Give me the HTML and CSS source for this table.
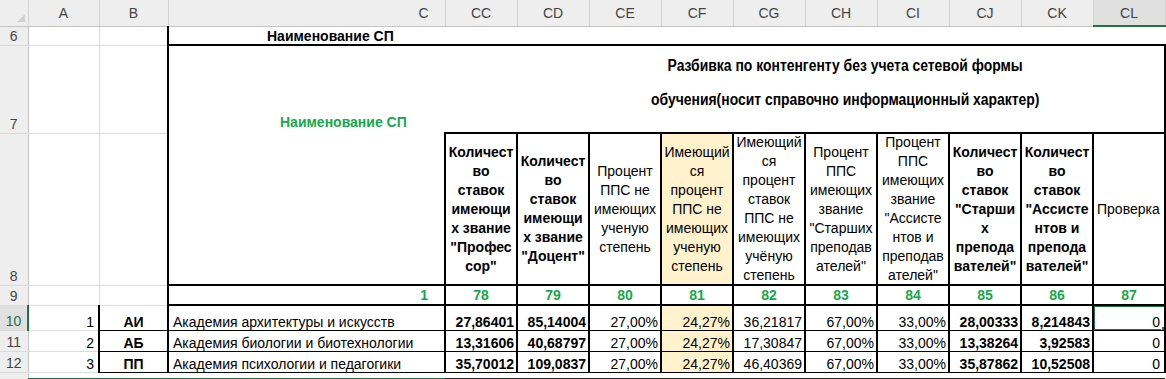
FILE: index.html
```html
<!DOCTYPE html>
<html lang="ru">
<head>
<meta charset="utf-8">
<link rel="stylesheet" href="styles.css">
</head>
<body>
<table class="sheet">
  <colgroup>
    <col class="w-rh"><col class="w-a"><col class="w-b"><col class="w-c">
    <col class="w-n"><col class="w-n"><col class="w-n"><col class="w-n"><col class="w-n">
    <col class="w-n"><col class="w-n"><col class="w-n"><col class="w-n"><col class="w-n">
  </colgroup>
  <tr class="r-head">
    <th class="corner"><span class="tri"></span></th>
    <th class="ch">A</th>
    <th class="ch">B</th>
    <th class="ch ch-c">C</th>
    <th class="ch">CC</th><th class="ch">CD</th><th class="ch">CE</th><th class="ch">CF</th><th class="ch">CG</th>
    <th class="ch">CH</th><th class="ch">CI</th><th class="ch">CJ</th><th class="ch">CK</th><th class="ch ch-sel">CL</th>
  </tr>
  <tr class="r6">
    <td class="rh">6</td>
    <td class="g"></td><td class="g"></td>
    <td class="c6 b">Наименование СП</td>
    <td class="cc6" colspan="10"></td>
  </tr>
  <tr class="r7">
    <td class="rh">7</td>
    <td class="g"></td><td class="g"></td>
    <td class="c7 b green">Наименование СП</td>
    <td class="cc7" colspan="10"><div class="title"><span class="tline">Разбивка по контенгенту без учета сетевой формы</span><span class="tline">обучения(носит справочно информационный характер)</span></div></td>
  </tr>
  <tr class="r8">
    <td class="rh">8</td>
    <td class="g"></td><td class="g"></td>
    <td class="c8"></td>
    <td class="hc b"><div class="hd">Количест<br>во<br>ставок<br>имеющи<br>х звание<br>"Профес<br>сор"</div></td>
    <td class="hc b"><div class="hd">Количест<br>во<br>ставок<br>имеющи<br>х звание<br>"Доцент"</div></td>
    <td class="hc"><div class="hd">Процент<br>ППС не<br>имеющих<br>ученую<br>степень</div></td>
    <td class="hc yel"><div class="hd">Имеющий<br>ся<br>процент<br>ППС не<br>имеющих<br>ученую<br>степень</div></td>
    <td class="hc"><div class="hd">Имеющий<br>ся<br>процент<br>ставок<br>ППС не<br>имеющих<br>учёную<br>степень</div></td>
    <td class="hc"><div class="hd">Процент<br>ППС<br>имеющих<br>звание<br>"Старших<br>преподав<br>ателей"</div></td>
    <td class="hc"><div class="hd">Процент<br>ППС<br>имеющих<br>звание<br>"Ассисте<br>нтов и<br>преподав<br>ателей"</div></td>
    <td class="hc b"><div class="hd">Количест<br>во<br>ставок<br>"Старши<br>х<br>препода<br>вателей"</div></td>
    <td class="hc b"><div class="hd">Количест<br>во<br>ставок<br>"Ассисте<br>нтов и<br>препода<br>вателей"</div></td>
    <td class="hc"><div class="hd hd-left">Проверка</div></td>
  </tr>
  <tr class="r9">
    <td class="rh">9</td>
    <td class="g"></td><td class="g"></td>
    <td class="tk b green c9">1</td>
    <td class="tk b green">78</td><td class="tk b green">79</td><td class="tk b green">80</td><td class="tk b green">81</td><td class="tk b green">82</td>
    <td class="tk b green">83</td><td class="tk b green">84</td><td class="tk b green">85</td><td class="tk b green">86</td><td class="tk b green">87</td>
  </tr>
  <tr class="r10">
    <td class="rh rh-sel">10</td>
    <td class="g num">1</td>
    <td class="code b">АИ</td>
    <td class="name">Академия архитектуры и искусств</td>
    <td class="d b">27,86401</td><td class="d b">85,14004</td><td class="d">27,00%</td><td class="d yel">24,27%</td><td class="d">36,21817</td>
    <td class="d">67,00%</td><td class="d">33,00%</td><td class="d b">28,00333</td><td class="d b">8,214843</td>
    <td class="d dl sel-cell">0<span class="sel"><span class="handle"></span></span></td>
  </tr>
  <tr class="r11">
    <td class="rh">11</td>
    <td class="g num">2</td>
    <td class="code b">АБ</td>
    <td class="name">Академия биологии и биотехнологии</td>
    <td class="d b">13,31606</td><td class="d b">40,68797</td><td class="d">27,00%</td><td class="d yel">24,27%</td><td class="d">17,30847</td>
    <td class="d">67,00%</td><td class="d">33,00%</td><td class="d b">13,38264</td><td class="d b">3,92583</td><td class="d dl">0</td>
  </tr>
  <tr class="r12">
    <td class="rh">12</td>
    <td class="g num">3</td>
    <td class="code b">ПП</td>
    <td class="name">Академия психологии и педагогики</td>
    <td class="d b">35,70012</td><td class="d b">109,0837</td><td class="d">27,00%</td><td class="d yel">24,27%</td><td class="d">46,40369</td>
    <td class="d">67,00%</td><td class="d">33,00%</td><td class="d b">35,87862</td><td class="d b">10,52508</td><td class="d dl">0</td>
  </tr>
  <tr class="r13">
    <td class="rh"></td>
    <td class="e13 gl"></td><td class="e13 gl"></td><td class="e13 gl"></td>
    <td class="e13"></td><td class="e13"></td><td class="e13"></td><td class="e13"></td><td class="e13"></td>
    <td class="e13"></td><td class="e13"></td><td class="e13"></td><td class="e13"></td><td class="e13"></td>
  </tr>
</table>
</body>
</html>
```
FILE: styles.css
```css
html, body {
  margin: 0;
  padding: 0;
  background: #fff;
}
body {
  width: 1166px;
  height: 379px;
  overflow: hidden;
}
.sheet {
  border-collapse: collapse;
  table-layout: fixed;
  width: 1165px;
  font-family: "Liberation Sans", Arial, sans-serif;
  font-size: 14px;
  color: #000;
}
.w-rh { width: 28px; }
.w-a { width: 71px; }
.w-b { width: 69px; }
.w-c { width: 277px; }
.w-n { width: 72px; }

td, th {
  padding: 0 2px;
  white-space: nowrap;
  overflow: hidden;
  font-weight: normal;
}
.b { font-weight: bold; }
.green { color: #14a94b; }

/* headers */
.r-head { height: 26px; }
.corner {
  background: #eeeeee;
  border-right: 1px solid #d2d2d2;
  border-bottom: 1px solid #c4c4c4;
  position: relative;
}
.tri {
  position: absolute;
  right: 3px;
  bottom: 4px;
  width: 0;
  height: 0;
  border-left: 8px solid transparent;
  border-bottom: 8px solid #d0d0d0;
}
.ch {
  background: #eeeeee;
  color: #444;
  text-align: center;
  border-right: 1px solid #d2d2d2;
  border-bottom: 1px solid #c4c4c4;
  vertical-align: middle;
}
.ch-c { text-align: right; padding-right: 16px; }
.ch-sel {
  background: #e0e0e0;
  border-bottom: 2px solid #217346;
}
.rh {
  background: #eeeeee;
  color: #444;
  text-align: center;
  vertical-align: bottom;
  padding: 0 0 1px 0;
  border-right: 1px solid #c4c4c4;
  border-bottom: 1px solid #dadada;
}
.rh-sel {
  background: #e0e0e0;
  color: #217346;
  border-right: 2px solid #217346;
}
.g { border: 1px solid #dcdcdc; }

/* rows */
.r6 { height: 19px; }
.r7 { height: 88px; }
.r8 { height: 152px; }
.r9 { height: 20px; }
.r10 { height: 25px; }
.r11 { height: 21px; }
.r12 { height: 21px; }
.r13 { height: 7px; }

.c6 {
  border-left: 2px solid #000;
  border-bottom: 2px solid #000;
  text-align: left;
  padding-left: 98px;
  vertical-align: bottom;
}
.cc6 { border-bottom: 2px solid #000; }
.c7 {
  border-left: 2px solid #000;
  border-top: 2px solid #000;
  vertical-align: bottom;
  padding-left: 111px;
  padding-bottom: 3px;
}
.cc7 {
  border-top: 2px solid #000;
  border-bottom: 2px solid #000;
  border-right: 2px solid #000;
  vertical-align: top;
  padding: 0;
}
.title {
  font-weight: bold;
  display: flex;
  flex-direction: column;
  align-items: center;
  line-height: 34px;
  padding: 3px 0 0 82px;
  font-size: 16px;
}
.tline {
  display: block;
  transform: scaleX(0.87);
  transform-origin: center;
}
.c8 {
  border-left: 2px solid #000;
  border-bottom: 2px solid #000;
}
.hc {
  border: 2px solid #000;
  padding: 0;
  vertical-align: middle;
}
.hd {
  height: 149px;
  display: flex;
  flex-direction: column;
  justify-content: center;
  align-items: center;
  text-align: center;
  line-height: 19px;
  overflow: hidden;
}
.hd-left { align-items: flex-start; padding-left: 3px; }
.yel { background: #fff2cc; }

.tk {
  border: 2px solid #000;
  text-align: center;
  vertical-align: middle;
}
.c9 { text-align: right; padding-right: 16px; }

.code {
  border: 1px solid #000;
  border-left: 2px solid #000;
  text-align: center;
  vertical-align: bottom;
}
.name {
  border-top: 1px solid #000;
  border-bottom: 1px solid #000;
  border-left: 2px solid #000;
  border-right: 2px solid #000;
  vertical-align: bottom;
  padding-left: 4px;
}
.d {
  border-top: 1px solid #000;
  border-bottom: 1px solid #000;
  border-left: 2px solid #000;
  border-right: 2px solid #000;
  text-align: right;
  vertical-align: bottom;
  padding-right: 2px;
}
.dl { padding-right: 4px; }
.num { text-align: right; vertical-align: bottom; padding-right: 4px; }
.sel-cell { position: relative; }
.sel {
  position: absolute;
  left: -1px;
  top: -1px;
  right: -2px;
  bottom: -1px;
  border: 2px solid #217346;
}
.handle {
  position: absolute;
  right: -5px;
  bottom: -5px;
  width: 6px;
  height: 6px;
  background: #217346;
  border: 1px solid #fff;
}
.e13 { border-bottom: 2px solid #222; }
.e13.gl { border-bottom: 2px solid #217346; }
```
